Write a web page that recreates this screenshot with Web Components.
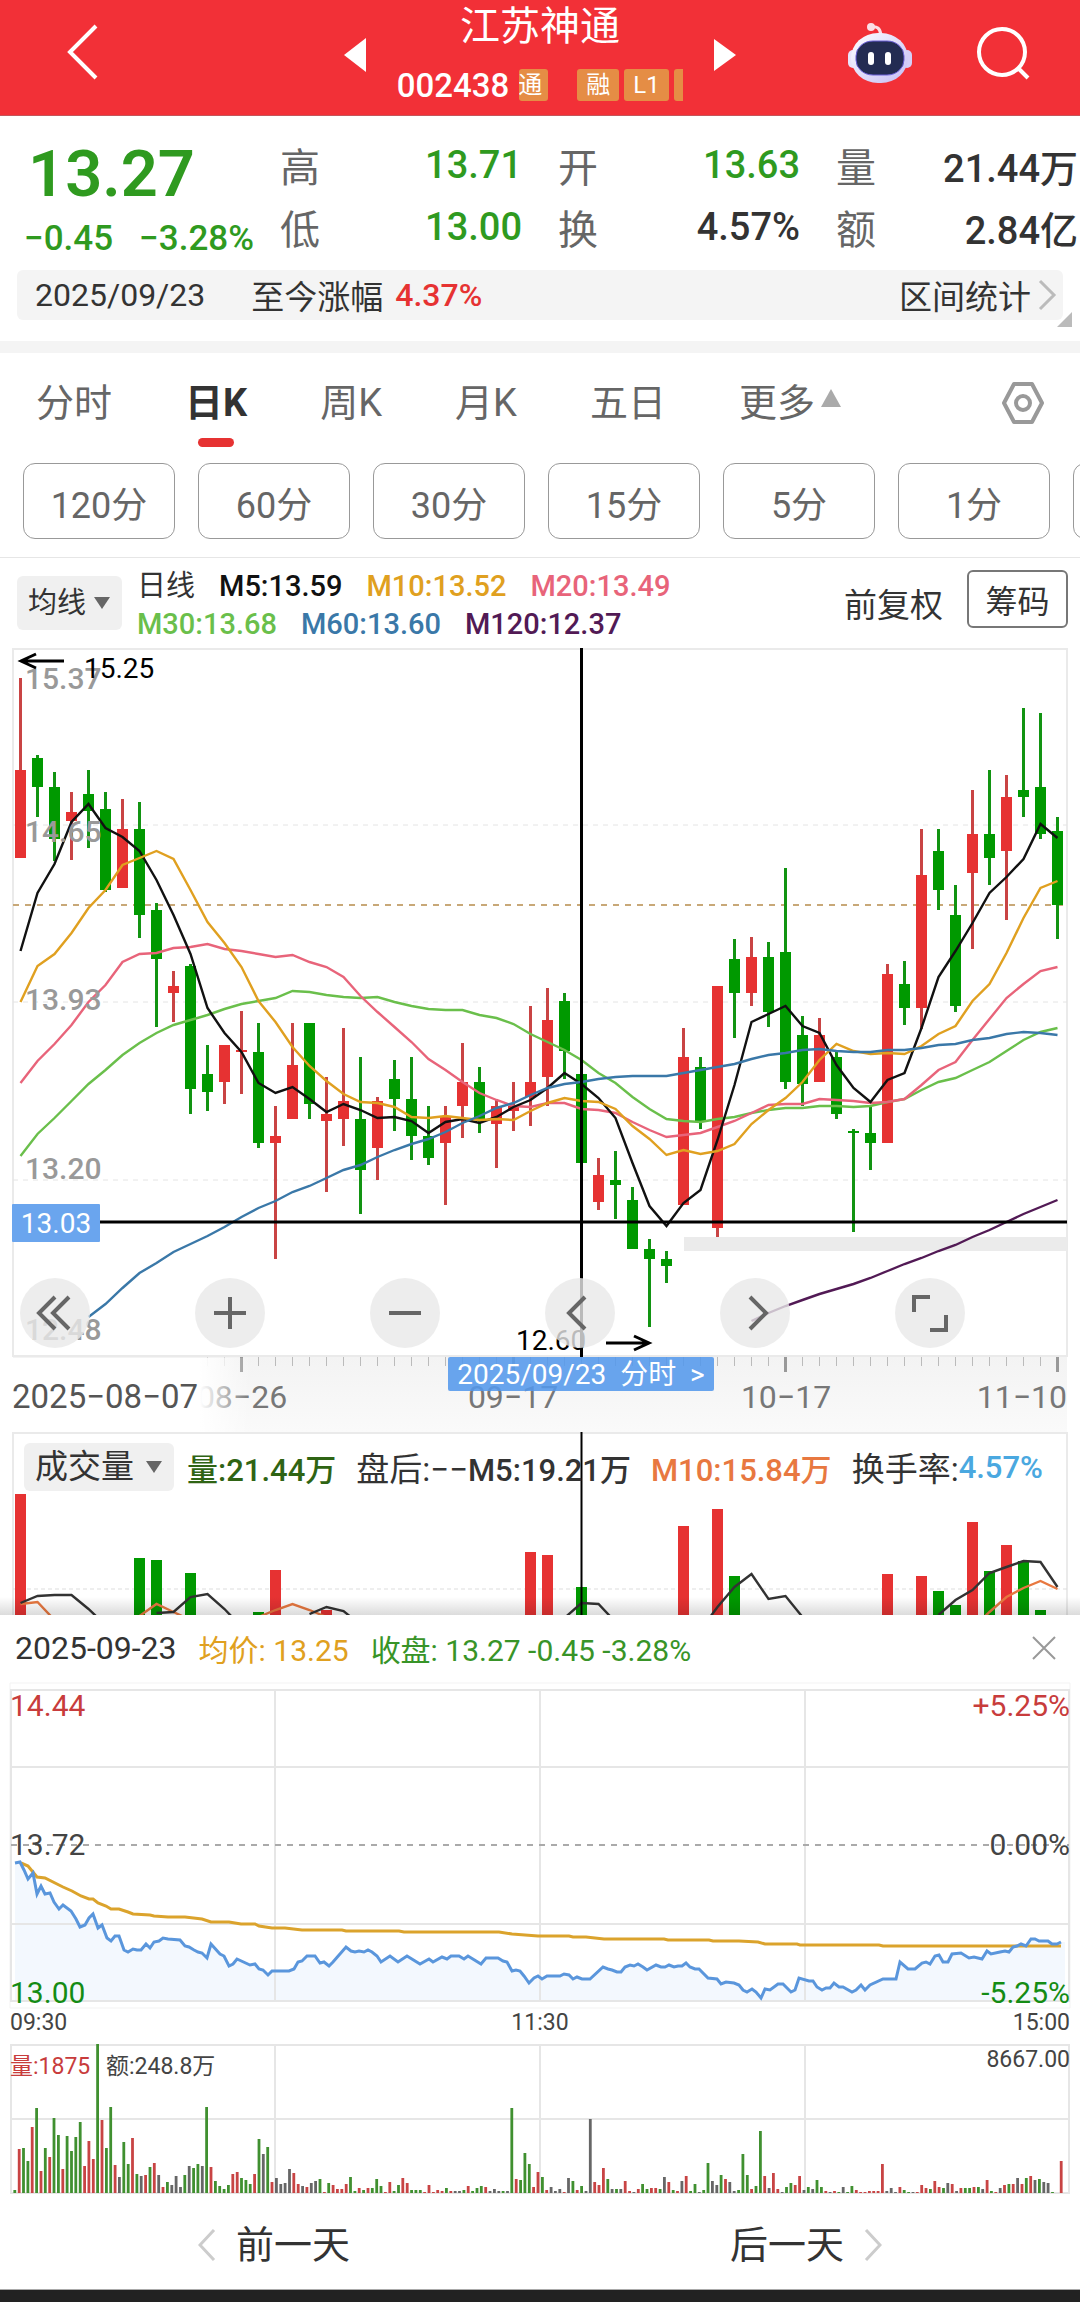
<!DOCTYPE html>
<html lang="zh-CN">
<head>
<meta charset="utf-8">
<meta name="viewport" content="width=device-width, initial-scale=1">
<title>江苏神通 002438</title>
<style>
	body {
		margin: 0;
		background: #fff;
		color: #333;
		font-family: Roboto, "Noto Sans CJK SC", sans-serif;
	}
</style>
</head>
<body>
<stock-page></stock-page>

<script>
const RED = '#e63232';
const GREEN = '#009900';

/**
 * Base element: attaches an open shadow root and fills it once connected
 */
class BaseElement extends HTMLElement {
	constructor() {
		super();
		this.attachShadow({ mode: 'open' });
	}

	connectedCallback() {
		this.shadowRoot.innerHTML = `
      <style>
        * { box-sizing: border-box; }
        :host { display: block; }
        button, select {
          font-family: inherit;
          color: inherit;
          background: none;
          border: 0;
          margin: 0;
          padding: 0;
          cursor: pointer;
        }
        svg { display: block; flex: none; }
      </style>
      ${this.render()}
    `;
	}
}

/**
 * Red title bar with stock name, code and tags
 */
class TopBar extends BaseElement {
	render() {
		return `
      <style>
        header {
          display: grid;
          grid-template-columns: 1fr 392px 1fr;
          align-items: center;
          height: 116px;
          background: #f23037;
          border-bottom: 1px solid #c4555a;
          color: #fff;
        }
        .back { padding: 0 64px 12px; justify-self: start; }
        .stock { display: flex; align-items: center; justify-content: space-between; }
        .stock > button { padding-bottom: 6px; }
        .name { text-align: center; }
        h1 { margin: 0; font-size: 40px; line-height: 54px; font-weight: 400; }
        .code { display: flex; align-items: center; height: 62px; font-size: 33px; font-weight: 500; }
        .tags { display: flex; gap: 5px; width: 164px; margin-left: 10px; overflow: hidden; }
        .tag {
          flex: none;
          padding: 0 9px;
          height: 32px;
          border-radius: 3px;
          background: #e58d45;
          font-size: 24px;
          line-height: 32px;
          font-weight: 400;
        }
        .cut { display: flex; justify-content: flex-end; width: 29px; padding: 0 6px 0 0; margin-right: 24px; overflow: hidden; }
        .edge { width: 20px; }
        .tools { display: flex; align-items: center; justify-content: flex-end; gap: 64px; padding: 0 50px 10px 0; }
      </style>
      <header>
        <button class="back" aria-label="返回">
          <svg width="36" height="58" viewBox="0 0 36 58" fill="none" stroke="#fff" stroke-width="4"><path d="M32 3 6 29 32 55"/></svg>
        </button>
        <div class="stock">
          <button aria-label="上一只"><svg width="22" height="34" viewBox="0 0 22 34"><path d="M22 0v34L0 17z" fill="#fff"/></svg></button>
          <div class="name">
            <h1>江苏神通</h1>
            <div class="code">
              <span>002438</span>
              <div class="tags">
                <span class="tag cut">通</span><span class="tag">融</span><span class="tag">L1</span><span class="tag edge"></span>
              </div>
            </div>
          </div>
          <button aria-label="下一只"><svg width="22" height="34" viewBox="0 0 22 34"><path d="M0 1v32L22 17z" fill="#fff"/></svg></button>
        </div>
        <div class="tools">
          <button aria-label="智能助手">
            <svg width="64" height="62" viewBox="0 -2 64 62">
              <defs>
                <linearGradient id="shell" x1="0" y1="0" x2="1" y2="1">
                  <stop offset="0" stop-color="#fff"/><stop offset="1" stop-color="#c4bdf5"/>
                </linearGradient>
              </defs>
              <path d="M23 3c6-1 9 1 10 8" fill="none" stroke="#fbdfe6" stroke-width="3"/>
              <circle cx="23" cy="3" r="4" fill="#fbdfe6"/>
              <rect x="0" y="26" width="10" height="18" rx="5" fill="#e9e4fb"/>
              <rect x="54" y="26" width="10" height="18" rx="5" fill="#d5cff8"/>
              <rect x="3" y="9" width="57" height="50" rx="27" ry="25" fill="url(#shell)"/>
              <rect x="8" y="17" width="48" height="34" rx="17" ry="15" fill="#232c52" stroke="#6a5fd8" stroke-width="1"/>
              <rect x="20" y="28" width="6" height="13" rx="3" fill="#fff"/>
              <rect x="37" y="28" width="6" height="13" rx="3" fill="#fff"/>
            </svg>
          </button>
          <button aria-label="搜索">
            <svg width="54" height="54" viewBox="0 0 54 54" fill="none" stroke="#fff" stroke-width="4"><circle cx="26" cy="26" r="23"/><path d="m42 42 10 10"/></svg>
          </button>
        </div>
      </header>
    `;
	}
}

/**
 * Label and value pair, the value is slotted
 */
class StatItem extends BaseElement {
	render() {
		return `
      <style>
        :host { display: flex; align-items: center; justify-content: space-between; height: 62px; font-size: 38px; font-weight: 500; white-space: nowrap; }
        .label { color: #666; font-size: 40px; font-weight: 400; }
        .value { color: #333; }
        :host([down]) .value { color: #2f9a1f; }
      </style>
      <span class="label">${this.getAttribute('label')}</span>
      <span class="value"><slot></slot></span>
    `;
	}
}

class QuoteSummary extends BaseElement {
	render() {
		return `
      <style>
        .quote { display: grid; grid-template-columns: 220px 1fr 1fr 1fr; column-gap: 36px; padding: 18px 2px 0 24px; height: 154px; }
        .now { color: #2f9a1f; }
        .price { padding-left: 4px; font-size: 65px; line-height: 80px; font-weight: 600; }
        .change { display: flex; gap: 26px; font-size: 35px; line-height: 50px; font-weight: 500; white-space: nowrap; }
        .wrap { position: relative; padding: 0 17px 21px; }
        .range {
          display: flex;
          align-items: center;
          height: 50px;
          padding: 0 6px 0 18px;
          border-radius: 6px;
          background: #f4f4f4;
          font-size: 32px;
        }
        .since { margin: 0 12px 0 46px; font-size: 33px; }
        .range b { color: ${RED}; font-weight: 500; }
        .link { display: flex; align-items: center; gap: 6px; margin-left: auto; color: #333; font-size: 33px; text-decoration: none; }
        .divider { height: 12px; background: #f4f4f4; }
        .corner { position: absolute; right: 8px; bottom: 14px; }
      </style>
      <div class="quote">
        <div class="now">
          <div class="price">13.27</div>
          <div class="change"><span>−0.45</span><span>−3.28%</span></div>
        </div>
        <div><stat-item label="高" down>13.71</stat-item><stat-item label="低" down>13.00</stat-item></div>
        <div><stat-item label="开" down>13.63</stat-item><stat-item label="换">4.57%</stat-item></div>
        <div><stat-item label="量">21.44万</stat-item><stat-item label="额">2.84亿</stat-item></div>
      </div>
      <div class="wrap">
        <div class="range">
          <span>2025/09/23</span><span class="since">至今涨幅</span><b>4.37%</b>
          <a class="link" href="#range">区间统计<svg width="20" height="34" viewBox="0 0 20 34" fill="none" stroke="#bbb" stroke-width="3"><path d="m3 3 14 14L3 31"/></svg></a>
        </div>
        <svg class="corner" width="15" height="15"><path d="M15 0v15H0z" fill="#bbb"/></svg>
      </div>
      <div class="divider"></div>
    `;
	}
}

/**
 * Period tabs and the row of minute intervals
 */
class PeriodTabs extends BaseElement {
	render() {
		const tabs = ['分时', '日K', '周K', '月K', '五日'];
		const minutes = [120, 60, 30, 15, 5, 1];
		return `
      <style>
        :host { border-bottom: 1px solid #e6e6e6; overflow: hidden; }
        nav { display: flex; align-items: center; gap: 73px; height: 110px; padding: 0 35px 10px 36px; color: #666; }
        nav button { position: relative; font-size: 38px; line-height: 52px; }
        .on { color: #333; font-weight: 700; }
        .on::after {
          content: "";
          position: absolute;
          left: 50%;
          bottom: -18px;
          width: 36px;
          height: 9px;
          margin-left: -18px;
          border-radius: 5px;
          background: ${RED};
        }
        .more { display: flex; align-items: center; gap: 6px; }
        nav .gear { margin-left: auto; }
        .minutes { display: flex; gap: 23px; padding: 0 0 18px 23px; }
        .minutes button {
          flex: 0 0 152px;
          height: 76px;
          padding-top: 2px;
          border: 1px solid #999;
          border-radius: 12px;
          color: #666;
          font-size: 36px;
        }
      </style>
      <nav>
        ${tabs.map((t) => `<button class="${t === '日K' ? 'on' : ''}">${t}</button>`).join('')}
        <button class="more">更多<svg width="20" height="28" viewBox="0 0 20 28"><path d="M10 0l10 18H0z" fill="#aaa"/></svg></button>
        <button class="gear" aria-label="设置">
          <svg width="44" height="44" viewBox="0 0 44 44" fill="none" stroke="#999" stroke-width="4" stroke-linejoin="round"><path d="M13 3h18l10 19-10 19H13L3 22z"/><circle cx="22" cy="22" r="7"/></svg>
        </button>
      </nav>
      <div class="minutes">
        ${minutes.map((m) => `<button>${m}分</button>`).join('')}
        <button aria-label="更多周期"></button>
      </div>
    `;
	}
}

/**
 * Grey drop-down with a small arrow; name and value come from attributes
 */
class PickList extends BaseElement {
	render() {
		return `
      <style>
        :host { display: flex; flex: none; border-radius: 6px; background: #f0f0f0; }
        label { display: flex; flex: 1; align-items: center; justify-content: space-between; padding: 0 12px 0 11px; }
        select { appearance: none; font-size: inherit; line-height: 48px; height: 48px; }
      </style>
      <label>
        <select aria-label="${this.getAttribute('name')}"><option>${this.getAttribute('value')}</option></select>
        <svg width="16" height="12" viewBox="0 0 16 12"><path d="M0 0h16L8 12z" fill="#666"/></svg>
      </label>
    `;
	}
}

class AverageLegend extends BaseElement {
	render() {
		return `
      <style>
        :host { display: flex; align-items: center; height: 90px; padding: 0 12px 0 17px; }
        pick-list { width: 105px; height: 54px; font-size: 29px; }
        .values { margin-left: 15px; padding-top: 3px; font-size: 29px; line-height: 38px; font-weight: 500; white-space: nowrap; }
        .row { display: flex; gap: 24px; }
        .title { font-weight: 400; }
        .adjust { margin-left: auto; font-size: 33px; }
        .chips { width: 101px; height: 58px; margin: 0 0 8px 24px; border: 2px solid #777; border-radius: 6px; font-size: 32px; }
      </style>
      <pick-list name="指标" value="均线"></pick-list>
      <div class="values">
        <div class="row">
          <span class="title">日线</span>
          <span style="color:#111">M5:13.59</span>
          <span style="color:#e0a020">M10:13.52</span>
          <span style="color:#e8647a">M20:13.49</span>
        </div>
        <div class="row">
          <span style="color:#6abf4b">M30:13.68</span>
          <span style="color:#3a78a8">M60:13.60</span>
          <span style="color:#521a55">M120:12.37</span>
        </div>
      </div>
      <span class="adjust">前复权</span>
      <button class="chips">筹码</button>
    `;
	}
}

// Horizontal position of trading day i, shared by candles and volume
const dayX = (i) => 20.5 + i * 17;
const dayLine = (values, start = 0) => values.map((y, i) => `${dayX(i + start)},${y}`).join(' ');

// High, body top, body bottom, low, 1 for a rising day
const CANDLES = [
	[678, 770, 858, 858, 1], [755, 758, 787, 817, 0], [772, 787, 839, 861, 0], [792, 812, 821, 860, 1],
	[770, 794, 811, 848, 0], [792, 809, 890, 892, 0], [799, 829, 888, 888, 1], [802, 829, 915, 938, 0],
	[903, 910, 959, 1027, 0], [971, 986, 993, 1022, 1], [964, 966, 1089, 1114, 0], [1045, 1074, 1092, 1111, 0],
	[1045, 1045, 1082, 1104, 1], [1011, 1050, 1052, 1094, 1], [1023, 1052, 1143, 1148, 0], [1106, 1136, 1143, 1259, 1],
	[1023, 1065, 1119, 1119, 1], [1023, 1023, 1104, 1119, 0], [1077, 1114, 1121, 1192, 1], [1028, 1101, 1119, 1146, 1],
	[1057, 1119, 1170, 1214, 0], [1097, 1101, 1148, 1180, 1], [1060, 1079, 1099, 1131, 0], [1057, 1099, 1136, 1160, 0],
	[1106, 1136, 1158, 1165, 0], [1106, 1117, 1143, 1205, 1], [1043, 1082, 1106, 1138, 1], [1067, 1082, 1119, 1133, 0],
	[1099, 1106, 1124, 1168, 1], [1082, 1106, 1111, 1131, 1], [1006, 1082, 1097, 1126, 1], [988, 1020, 1077, 1106, 1],
	[993, 1001, 1051, 1079, 0], [1074, 1074, 1163, 1163, 0], [1158, 1175, 1202, 1210, 1], [1151, 1180, 1185, 1219, 0],
	[1187, 1200, 1249, 1249, 0], [1239, 1249, 1259, 1327, 0], [1251, 1259, 1266, 1283, 0], [1028, 1057, 1205, 1205, 1],
	[1057, 1067, 1122, 1129, 0], [986, 986, 1228, 1237, 1], [939, 959, 993, 1038, 0], [937, 957, 993, 1006, 1],
	[942, 957, 1012, 1027, 0], [868, 952, 1082, 1089, 0], [1016, 1035, 1084, 1106, 0], [1018, 1035, 1082, 1082, 1],
	[1052, 1057, 1114, 1119, 0], [1129, 1131, 1133, 1232, 0], [1106, 1133, 1143, 1170, 0], [964, 974, 1143, 1143, 1],
	[961, 984, 1008, 1025, 0], [829, 875, 1008, 1029, 1], [829, 851, 890, 910, 0], [885, 915, 1006, 1012, 0],
	[790, 834, 873, 949, 1], [770, 834, 858, 885, 0], [775, 797, 851, 920, 1], [708, 790, 797, 817, 0],
	[713, 787, 834, 839, 0], [817, 831, 905, 939, 0],
];

const AVERAGES = [
	{ color: '#6abf4b', start: 0, y: [1156, 1134, 1118, 1101, 1084, 1070, 1055, 1043, 1033, 1025, 1020, 1015, 1009, 1004, 1001, 998, 991, 992, 995, 997, 998, 997, 1002, 1006, 1009, 1010, 1010, 1015, 1018, 1024, 1034, 1042, 1050, 1060, 1073, 1083, 1097, 1109, 1119, 1121, 1122, 1119, 1117, 1113, 1110, 1108, 1108, 1106, 1106, 1107, 1106, 1102, 1099, 1090, 1082, 1078, 1070, 1062, 1051, 1040, 1032, 1028] },
	{ color: '#e8647a', start: 0, y: [1083, 1061, 1044, 1025, 1002, 985, 962, 954, 953, 948, 947, 944, 949, 951, 954, 957, 955, 962, 967, 977, 996, 1012, 1027, 1042, 1059, 1070, 1082, 1093, 1100, 1106, 1107, 1103, 1103, 1109, 1110, 1113, 1122, 1130, 1137, 1135, 1133, 1127, 1121, 1113, 1105, 1104, 1104, 1099, 1100, 1101, 1103, 1102, 1099, 1085, 1070, 1062, 1040, 1019, 998, 984, 971, 967] },
	{ color: '#111', start: 0, y: [951, 893, 864, 822, 804, 828, 837, 851, 880, 915, 954, 1008, 1033, 1052, 1083, 1093, 1087, 1099, 1112, 1104, 1110, 1118, 1117, 1121, 1133, 1122, 1119, 1123, 1117, 1107, 1100, 1088, 1073, 1084, 1098, 1118, 1163, 1206, 1226, 1203, 1190, 1140, 1085, 1022, 1014, 1006, 1026, 1033, 1065, 1088, 1102, 1080, 1073, 1028, 977, 951, 923, 893, 877, 859, 824, 838] },
	{ color: '#e0a020', start: 0, y: [1002, 966, 954, 933, 908, 890, 865, 858, 851, 859, 890, 922, 943, 967, 1001, 1022, 1047, 1066, 1081, 1094, 1102, 1103, 1107, 1117, 1118, 1116, 1118, 1120, 1119, 1120, 1111, 1103, 1098, 1101, 1102, 1109, 1126, 1139, 1155, 1150, 1154, 1151, 1144, 1124, 1110, 1098, 1082, 1060, 1044, 1051, 1054, 1053, 1054, 1046, 1034, 1026, 1001, 984, 953, 918, 888, 881] },
	{ color: '#3a78a8', start: 4, y: [1317, 1304, 1288, 1273, 1263, 1252, 1244, 1236, 1227, 1217, 1208, 1201, 1192, 1186, 1178, 1170, 1165, 1157, 1150, 1144, 1139, 1132, 1123, 1116, 1108, 1103, 1095, 1088, 1084, 1082, 1079, 1077, 1076, 1076, 1076, 1073, 1070, 1067, 1064, 1059, 1055, 1053, 1050, 1049, 1051, 1052, 1052, 1050, 1050, 1048, 1045, 1044, 1040, 1038, 1034, 1032, 1033, 1035] },
	{ color: '#521a55', start: 43, y: [1321, 1313, 1306, 1300, 1294, 1289, 1284, 1278, 1271, 1264, 1258, 1251, 1245, 1237, 1230, 1222, 1214, 1207, 1200] },
];

/**
 * Daily candles with moving averages, crosshair and zoom buttons
 */
class CandleChart extends BaseElement {
	candles() {
		return CANDLES.map(([high, top, bottom, low, up], i) => {
			const x = dayX(i);
			const body = up ? RED : GREEN;
			return `<path d="M${x} ${high}V${low}" stroke="${up ? '#c94444' : '#129412'}" stroke-width="3"/>
        <rect x="${x - 5.5}" y="${top}" width="11" height="${bottom - top}" fill="${body}"/>`;
		}).join('');
	}

	ticks() {
		let out = '';
		for (let i = 11; i < 62; i++) {
			const major = (i - 13) % 16 === 0;
			out += `<path d="M${dayX(i)} 1357v${major ? 15 : 9}" stroke="${major ? '#999' : '#bbb'}" stroke-width="${major ? 3 : 1}" opacity="${i < 13 ? 0.5 : 1}"/>`;
		}
		return out;
	}

	render() {
		const icons = [
			['最早', 'M36 20 20 36l16 16M50 20 34 36l16 16'],
			['放大', 'M36 20v32M20 36h32'],
			['缩小', 'M20 36h32'],
			['左移', 'M41 20 25 36l16 16'],
			['右移', 'M31 20l16 16-16 16'],
			['全屏', 'M20 35V20h16M52 38v15H36'],
		];
		return `
      <style>
        :host { position: relative; }
        .chart { width: 100%; height: auto; }
        .axis { font-size: 30px; font-weight: 500; fill: #999; }
        .date { font-size: 32px; fill: #777; }
        .mark { font-size: 28px; fill: #000; }
        .tools { position: absolute; left: 0; right: 0; bottom: 84px; display: flex; gap: 105px; padding-left: 20px; }
        .tools button { width: 70px; height: 70px; border-radius: 50%; background: rgba(233, 233, 233, 0.8); }
        .day {
          position: absolute;
          left: 448px;
          bottom: 41px;
          width: 266px;
          height: 34px;
          border-radius: 2px;
          background: rgba(84, 152, 236, 0.88);
          color: #fff;
          font-size: 28px;
          line-height: 36px;
          white-space: pre;
        }
      </style>
      <svg class="chart" viewBox="0 648 1080 784">
        <defs>
          <linearGradient id="floor" x1="0" y1="0" x2="0" y2="1"><stop offset="0" stop-color="#f3f3f3"/><stop offset="1" stop-color="#fafafa"/></linearGradient>
          <linearGradient id="fade"><stop offset="0.8" stop-color="#fff"/><stop offset="1" stop-color="#fff" stop-opacity="0"/></linearGradient>
        </defs>
        <rect x="13" y="1357" width="1054" height="75" fill="url(#floor)"/>
        <rect x="13" y="649" width="1054" height="707" fill="none" stroke="#eaeaea" stroke-width="2"/>
        <path d="M13 825h1054M13 1002h1054M13 1180h1054" stroke="#e4e4e4" stroke-width="1" stroke-dasharray="5 5"/>
        <path d="M13 905h1054" stroke="#c8a878" stroke-width="2" stroke-dasharray="6 6"/>
        <rect x="684" y="1237" width="383" height="14" fill="#ebebeb"/>
        ${this.candles()}
        ${AVERAGES.map((a) => `<polyline points="${dayLine(a.y, a.start)}" fill="none" stroke="${a.color}" stroke-width="2.4"/>`).join('')}
        <g class="axis">
          <text x="25" y="689">15.37</text>
          <text x="25" y="842">14.65</text>
          <text x="25" y="1010">13.93</text>
          <text x="25" y="1179">13.20</text>
          <text x="25" y="1340">12.48</text>
        </g>
        <g fill="none" stroke="#000" stroke-width="3">
          <path d="M64 661H22M36 654l-15 7 15 7"/>
          <path d="M606 1343h42M634 1336l15 7-15 7"/>
        </g>
        <text class="mark" x="84" y="678">15.25</text>
        <text class="mark" x="516" y="1350">12.60</text>
        <path d="M581.5 648v709M100 1222h967" stroke="#000" stroke-width="3"/>
        <rect x="12" y="1204" width="88" height="38" rx="1" fill="#6aa5ee"/>
        <text x="56" y="1233" text-anchor="middle" font-size="28" fill="#fff">13.03</text>
        ${this.ticks()}
        <g class="date">
          <text x="242" y="1408" text-anchor="middle">08−26</text>
          <rect x="0" y="1358" width="250" height="74" fill="url(#fade)"/>
          <text x="12" y="1408" font-size="33" fill="#555">2025−08−07</text>
          <text x="513" y="1408" text-anchor="middle">09−17</text>
          <text x="786" y="1408" text-anchor="middle">10−17</text>
          <text x="1067" y="1408" text-anchor="end">11−10</text>
        </g>
      </svg>
      <div class="tools">
        ${icons.map(([name, d]) => `<button aria-label="${name}"><svg width="70" height="70" viewBox="1 1 70 70" fill="none" stroke="#666" stroke-width="4"><path d="${d}"/></svg></button>`).join('')}
      </div>
      <button class="day">2025/09/23  分时  &gt;</button>
    `;
	}
}

// Day index, bar top, 1 for a rising day
const VOLUMES = [
	[0, 1494, 1], [7, 1558, 0], [8, 1560, 0], [10, 1573, 0], [14, 1612, 0], [15, 1570, 1], [18, 1610, 1],
	[30, 1552, 1], [31, 1555, 1], [33, 1587, 0], [39, 1526, 1], [41, 1509, 1], [42, 1576, 0], [51, 1574, 1],
	[53, 1576, 1], [54, 1591, 0], [55, 1605, 0], [56, 1522, 1], [57, 1571, 0], [58, 1545, 1], [59, 1561, 0], [60, 1610, 0],
];

class VolumeChart extends BaseElement {
	render() {
		const fast = [
			[0, [1603, 1596, 1595, 1595, 1609, 1625]],
			[8, [1613, 1612, 1597, 1594, 1609, 1627]],
			[17, [1614, 1607, 1611, 1625]],
			[32, [1618, 1603, 1604, 1622]],
			[40, [1630, 1607, 1587, 1574, 1599, 1596, 1617]],
			[54, [1615, 1600, 1590, 1573, 1567, 1561, 1562, 1587]],
		];
		const slow = [
			[0, [1604, 1602, 1620]],
			[7, [1616, 1604, 1612, 1620]],
			[14, [1617, 1610, 1604, 1610, 1617]],
			[56, [1628, 1612, 1597, 1588, 1581, 1589]],
		];
		const lines = (set, color) => set.map(([start, y]) => `<polyline points="${dayLine(y, start)}" fill="none" stroke="${color}" stroke-width="2.4"/>`).join('');
		return `
      <style>
        :host { display: grid; }
        .chart, .head { grid-area: 1 / 1; }
        .chart { width: 100%; height: auto; overflow: hidden; }
        .head { display: flex; align-items: center; align-self: start; padding: 11px 0 0 24px; font-size: 31px; font-weight: 500; white-space: nowrap; }
        pick-list { width: 150px; margin-right: 13px; font-size: 33px; font-weight: 400; }
        .cjk { font-size: 33px; font-weight: 400; }
        .gap { margin-right: 20px; }
      </style>
      <svg class="chart" viewBox="0 1432 1080 183">
        <defs><linearGradient id="shade" x1="0" y1="0" x2="0" y2="1"><stop offset="0" stop-color="#000" stop-opacity="0"/><stop offset="1" stop-color="#000" stop-opacity="0.14"/></linearGradient></defs>
        <path d="M13 1615V1433h1054v182" fill="none" stroke="#eaeaea" stroke-width="2"/>
        <path d="M13 1589h1054" stroke="#ddd" stroke-width="1" stroke-dasharray="4 3"/>
        ${VOLUMES.map(([i, y, up]) => `<rect x="${dayX(i) - 5.5}" y="${y}" width="11" height="${1615 - y}" fill="${up ? RED : GREEN}"/>`).join('')}
        ${lines(slow, '#e87840')}
        ${lines(fast, '#333')}
        <path d="M581.5 1432v183" stroke="#000" stroke-width="2"/>
        <rect x="0" y="1597" width="1080" height="18" fill="url(#shade)"/>
      </svg>
      <div class="head">
        <pick-list name="副图" value="成交量"></pick-list>
        <span class="gap" style="color:#2f6414">量:21.44万</span>
        <span class="cjk">盘后:−−</span><span class="gap">M5:19.21万</span>
        <span class="gap" style="color:#e87840">M10:15.84万</span>
        <span class="cjk">换手率:</span><span style="color:#4aa8e0">4.57%</span>
      </div>
    `;
	}
}

const PRICE_LINE = '15,183 20,182 24,190 28,199 33,193 37,214 41,206 45,214 50,213 54,222 59,229 63,225 71,231 76,239 80,247 85,245 89,238 93,234 98,248 102,245 107,258 111,261 115,256 119,256 124,270 128,272 133,269 137,270 141,270 146,264 150,268 154,262 159,261 163,258 168,259 180,260 185,266 189,267 194,270 198,272 202,273 207,278 211,264 220,274 224,276 229,286 233,284 237,279 250,285 255,284 259,289 263,290 268,295 272,291 289,291 294,289 298,282 302,281 307,276 315,276 320,283 324,282 329,286 333,282 346,267 351,271 355,272 359,271 364,272 368,270 372,272 377,276 381,282 390,276 398,282 407,276 420,284 429,279 433,282 442,277 447,279 451,276 459,276 464,279 468,276 481,284 486,278 498,278 503,281 507,282 512,291 516,290 520,291 524,296 529,303 534,298 538,296 542,299 547,296 560,296 564,294 569,295 573,299 577,297 582,299 590,299 603,287 608,289 612,290 617,292 621,292 625,287 630,285 634,286 638,284 643,287 647,290 656,285 661,287 665,287 669,285 674,287 678,286 682,286 686,283 690,287 695,289 699,289 708,298 717,299 721,304 726,302 734,303 739,305 743,310 747,312 752,309 756,312 761,318 765,309 770,310 778,304 783,304 791,312 795,310 799,298 809,301 813,301 817,307 822,310 826,308 830,308 834,303 839,307 843,307 852,312 856,310 861,305 865,310 870,305 883,299 896,299 900,282 908,289 915,289 922,283 926,282 930,284 935,276 939,275 943,282 948,282 952,274 961,273 969,278 974,277 982,279 987,271 991,274 1000,272 1005,271 1009,272 1013,267 1017,266 1021,264 1026,266 1031,259 1035,259 1039,261 1048,261 1052,264 1057,264 1061,262';
const MEAN_LINE = '21,183 28,186 37,197 45,198 59,205 63,207 72,211 81,216 89,219 93,219 98,223 106,226 111,229 119,229 128,232 133,234 150,235 154,236 168,237 185,237 202,239 211,242 229,242 241,244 255,244 259,246 272,248 285,248 302,250 342,250 346,251 399,251 404,252 499,252 512,254 538,256 569,256 573,257 586,257 604,259 664,259 668,260 709,260 713,261 739,261 758,262 765,264 797,264 800,265 879,265 883,266 1061,266';

// One entry per minute: colour key (g down, r up, k flat) and bar height
const MINUTES = `g3 r44 g45 g32 r66 g85 r22 g45 r36 g75 g58 r24 g57 g42 g56 g71 r27 r52 r34 g149 r73 g45 g86 r28 k16 g51 g29 r55 g19 k17
r18 g26 r30 k18 r6 g11 k8 k17 k6 g18 k27 g25 g29 k27 g86 r26 g12 g7 g4 g8 r19 r21 g15 g13 g9 r19 g54 k39 g46 r11
k15 k9 k10 k24 r20 r9 k7 r6 k10 k12 g14 r1 g10 r8 r4 r4 r9 g16 g2 r5 g3 r5 g5 g14 g7 r1 r11 g2 g8 r15
r10 g3 g3 g3 r1 r8 r1 r3 r2 g5 r2 k2 k2 g3 r7 g2 g5 g7 r6 k2 k4 k2 g2 k2 g85 r14 g13 g40 g29 r6
r21 g16 r3 k6 k2 k4 r1 k15 g12 r3 g7 k2 k74 r11 r8 r25 g14 k4 g4 k4 r12 r2 k1 r4 g9 g4 r5 r5 g4 k16
r11 g3 r2 k12 r17 g2 g9 k1 g3 g30 k12 k8 g18 r14 k11 k2 g3 g39 g18 r4 g7 g62 r17 k5 r20 r4 k1 g6 g10 r8
r17 k3 g6 k4 g13 g6 r2 k1 r2 g1 k6 g1 g7 r3 r1 r1 r2 r2 r2 r29 k2 k5 k1 r6 g3 g1 k1 r1 r8 r5
g4 r12 r6 g5 k10 r9 k2 r5 g5 g5 r6 g6 k4 r13 g2 r1 k5 r8 g9 r9 k15 r9 g15 r17 k13 g14 k11 k10 g1 k0
r32`.split(/\s+/);

/**
 * Intraday panel for the selected day
 */
class IntradayPanel extends BaseElement {
	bars() {
		const colors = { g: '#409030', r: '#c84444', k: '#666' };
		return MINUTES.map((m, j) => {
			const h = Number(m.slice(1));
			return `<rect x="${(13.4 + j * 4.36).toFixed(1)}" y="${163 - h}" width="2.8" height="${h}" fill="${colors[m[0]]}"/>`;
		}).join('');
	}

	render() {
		return `
      <style>
        :host { background: #fff; }
        .head { display: flex; align-items: center; height: 66px; padding: 0 24px 0 15px; font-size: 30px; white-space: nowrap; }
        .day { font-size: 32px; }
        .mean { margin-left: 22px; color: #e0a020; }
        .close { margin-left: 22px; color: #389428; }
        .shut { margin-left: auto; }
        .chart { width: 100%; height: auto; }
        .grid { fill: none; stroke: #e6e6e6; stroke-width: 2; }
        .big { font-size: 30px; }
        .small { font-size: 23px; fill: #444; }
        .nav { display: flex; justify-content: space-between; align-items: flex-start; padding: 25px 198px 0; height: 95px; }
        .nav button { display: flex; align-items: center; gap: 20px; font-size: 38px; line-height: 52px; color: #333; }
        .base { height: 14px; background: #222; border-top: 1px solid #aaa; }
      </style>
      <div class="head">
        <span class="day">2025-09-23</span>
        <span class="mean">均价: 13.25</span>
        <span class="close">收盘: 13.27 -0.45 -3.28%</span>
        <button class="shut" aria-label="关闭"><svg width="24" height="24" viewBox="0 0 24 24" stroke="#999" stroke-width="2"><path d="M1 1l22 22M23 1 1 23"/></svg></button>
      </div>
      <svg class="chart" viewBox="0 1 1080 358">
        <path d="M10 328V3h1060v325z" fill="none" stroke="#f3f3f3" stroke-width="1"/>
        <path d="M15,183 ${PRICE_LINE} 1065,262 1065,321 15,321z" fill="#f3f8fe"/>
        <path class="grid" d="M11 10h1058v311H11zM11 87h1058M11 244h1058M275 10v311M540 10v311M805 10v311"/>
        <path d="M11 165h1058" stroke="#aaa" stroke-width="2" stroke-dasharray="6 6"/>
        <polyline points="${MEAN_LINE}" fill="none" stroke="#dba32c" stroke-width="3"/>
        <polyline points="${PRICE_LINE}" fill="none" stroke="#5a96dc" stroke-width="3"/>
        <g class="big">
          <text x="10" y="36" fill="#c83c3c">14.44</text>
          <text x="10" y="175" fill="#444">13.72</text>
          <text x="10" y="323" fill="#148c14">13.00</text>
          <g text-anchor="end">
            <text x="1070" y="36" fill="#c83c3c">+5.25%</text>
            <text x="1070" y="175" fill="#444">0.00%</text>
            <text x="1070" y="323" fill="#148c14">-5.25%</text>
          </g>
        </g>
        <g class="small">
          <text x="10" y="350">09:30</text>
          <text x="540" y="350" text-anchor="middle">11:30</text>
          <text x="1070" y="350" text-anchor="end">15:00</text>
        </g>
      </svg>
      <svg class="chart" viewBox="0 9 1080 155">
        <path class="grid" d="M11 15h1058v148H11zM11 89h1058M275 15v148M540 15v148M805 15v148"/>
        ${this.bars()}
        <text class="small" x="10" y="44" style="fill:#c83c3c">量:1875</text>
        <text class="small" x="106" y="44">额:248.8万</text>
        <text class="small" x="1070" y="37" text-anchor="end">8667.00</text>
      </svg>
      <div class="nav">
        <button><svg width="18" height="32" viewBox="0 0 18 32" fill="none" stroke="#ccc" stroke-width="3"><path d="M16 1 2 16l14 15"/></svg>前一天</button>
        <button>后一天<svg width="18" height="32" viewBox="0 0 18 32" fill="none" stroke="#ccc" stroke-width="3"><path d="m2 1 14 15L2 31"/></svg></button>
      </div>
      <div class="base"></div>
    `;
	}
}

class StockPage extends BaseElement {
	render() {
		return `
      <style>:host { overflow: hidden; }</style>
      <top-bar></top-bar>
      <quote-summary></quote-summary>
      <period-tabs></period-tabs>
      <average-legend></average-legend>
      <candle-chart></candle-chart>
      <volume-chart></volume-chart>
      <intraday-panel></intraday-panel>
    `;
	}
}

// Register the custom elements
customElements.define('top-bar', TopBar);
customElements.define('stat-item', StatItem);
customElements.define('quote-summary', QuoteSummary);
customElements.define('period-tabs', PeriodTabs);
customElements.define('pick-list', PickList);
customElements.define('average-legend', AverageLegend);
customElements.define('candle-chart', CandleChart);
customElements.define('volume-chart', VolumeChart);
customElements.define('intraday-panel', IntradayPanel);
customElements.define('stock-page', StockPage);
</script>
</body>
</html>
